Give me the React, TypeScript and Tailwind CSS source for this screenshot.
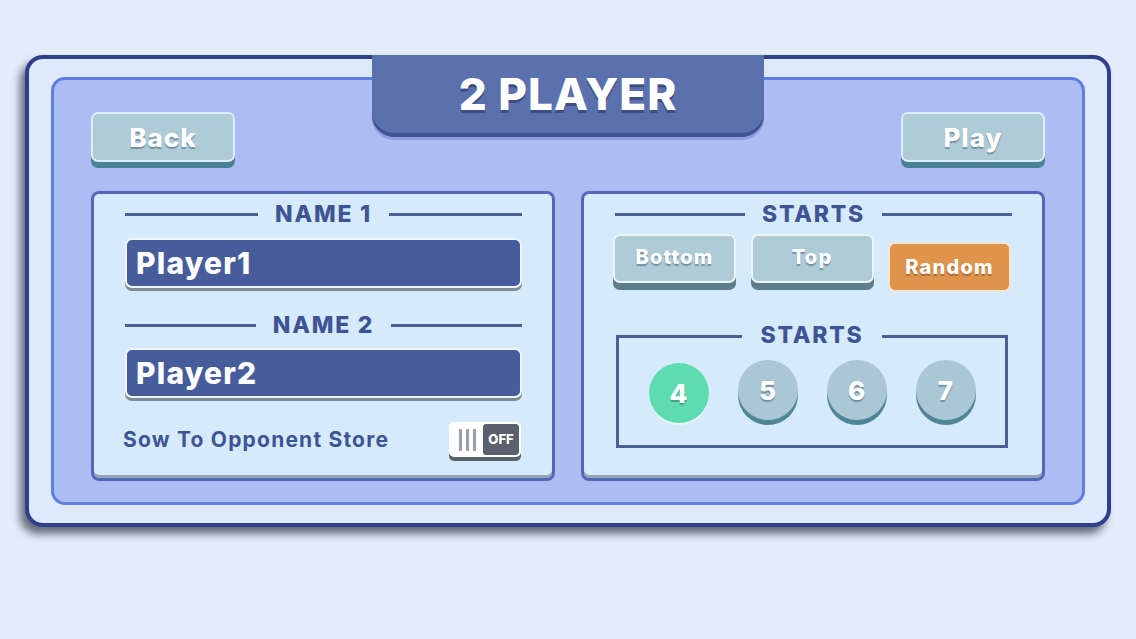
import React, { useState } from "react";

const font = { fontFamily: 'Inter, "Open Sans", "Liberation Sans", sans-serif' };

function Heading({ label }: { label: string }) {
  return (
    <div className="flex items-center h-[24px]">
      <div className="flex-1 h-[3px] bg-[#4a5e98]" />
      <span className="px-[17px] text-[23px] leading-none font-extrabold text-[#3e5494] tracking-[1.8px]">{label}</span>
      <div className="flex-1 h-[3px] bg-[#4a5e98]" />
    </div>
  );
}

function NameInput({ value, onChange }: { value: string; onChange: (v: string) => void }) {
  return (
    <input
      value={value}
      onChange={e => onChange(e.target.value)}
      className="w-full h-[50px] bg-[#475d9b] border-2 border-[#eef6fd] rounded-[7px] shadow-[0_3px_0_#7f8c98] px-[9px] text-[30px] font-extrabold text-white tracking-[1.2px] outline-none"
      style={font}
    />
  );
}

export default function App() {
  const [p1, setP1] = useState("Player1");
  const [p2, setP2] = useState("Player2");
  const [starts, setStarts] = useState("Random");
  const [count, setCount] = useState(4);
  const [sow, setSow] = useState(false);

  const greyBtn = "bg-[#afcbd7] border-2 border-[#dceef6] rounded-[7px] text-white font-extrabold [text-shadow:0_2px_1px_rgba(70,100,120,0.55)]";

  return (
    <div className="w-full h-[639px] bg-[#e5edfc] pt-[55px] pl-[25px]" style={font}>
      <div className="relative w-[1086px] h-[472px] bg-[#dfe9fc] border-4 border-[#2f3f8a] rounded-[18px] px-[22px] py-[18px] shadow-[-5px_7px_8px_rgba(30,38,50,0.65)]">
        <div className="w-full h-full bg-[#adbcf2] border-[3px] border-[#5d7fe3] rounded-[14px] px-[37px] pt-[32px]">
          <div className="flex justify-between">
            <button className={greyBtn + " w-[144px] h-[50px] text-[26px] tracking-[1px] shadow-[0_6px_0_#4b8293]"}>Back</button>
            <button className={greyBtn + " w-[144px] h-[50px] text-[26px] tracking-[1px] shadow-[0_6px_0_#4b8293]"}>Play</button>
          </div>
          <div className="grid grid-cols-2 gap-[26px] mt-[29px]">
            <div className="h-[290px] bg-[#d5ebfc] border-[3px] border-[#5468b8] rounded-[8px] shadow-[inset_0_-3px_0_#90a4b2] pl-[31px] pr-[30px] pt-[8px]">
              <Heading label="NAME 1" />
              <div className="mt-[12px]"><NameInput value={p1} onChange={setP1} /></div>
              <div className="mt-[25px]"><Heading label="NAME 2" /></div>
              <div className="mt-[11px]"><NameInput value={p2} onChange={setP2} /></div>
              <div className="flex items-center justify-between mt-[24px]">
                <span className="text-[21px] font-bold text-[#3e5494] tracking-[1.2px] ml-[-2px]">Sow To Opponent Store</span>
                <button onClick={() => setSow(s => !s)} className="flex w-[72px] h-[35px] mr-[1px] rounded-[5px] bg-white border-2 border-white shadow-[0_4px_0_#5b606d] overflow-hidden">
                  <div className="flex-1 flex items-center justify-center gap-[4px]">
                    <div className="w-[3px] h-[22px] bg-[#9aa0ab]" />
                    <div className="w-[3px] h-[22px] bg-[#9aa0ab]" />
                    <div className="w-[3px] h-[22px] bg-[#9aa0ab]" />
                  </div>
                  <div className="w-[36px] h-full bg-[#5b606d] rounded-[3px] flex items-center justify-center text-[13px] font-extrabold text-white">{sow ? "ON" : "OFF"}</div>
                </button>
              </div>
            </div>
            <div className="h-[290px] bg-[#d5ebfc] border-[3px] border-[#5468b8] rounded-[8px] shadow-[inset_0_-3px_0_#90a4b2] pl-[31px] pr-[30px] pt-[8px]">
              <Heading label="STARTS" />
              <div className="flex justify-between h-[58px] mt-[8px] ml-[-2px] mr-[1px]">
                {["Bottom", "Top", "Random"].map(s => (
                  <button
                    key={s}
                    onClick={() => setStarts(s)}
                    className={
                      starts === s
                        ? "w-[123px] h-[50px] mt-[8px] bg-[#df944c] border-2 border-[#f6e4d2] rounded-[7px] text-white text-[20px] font-extrabold tracking-[1.2px] [text-shadow:0_2px_1px_rgba(120,70,30,0.5)]"
                        : "w-[123px] h-[49px] bg-[#afcbd7] border-2 border-[#eaf5fa] rounded-[7px] text-white text-[20px] font-extrabold tracking-[1.2px] shadow-[0_7px_0_#5e7d8c] [text-shadow:0_2px_1px_rgba(70,100,120,0.55)] pb-[3px]"
                    }
                  >
                    {s}
                  </button>
                ))}
              </div>
              <div className="relative mt-[43px] w-[392px] ml-[1px] h-[113px] border-[3px] border-[#4a5e98]">
                <div className="absolute left-0 right-0 top-[-14px] flex justify-center">
                  <span className="bg-[#d5ebfc] px-[18px] text-[23px] leading-none font-extrabold text-[#3e5494] tracking-[1.8px]">STARTS</span>
                </div>
                <div className="flex justify-center gap-[29px] pt-[22px]">
                  {[4, 5, 6, 7].map(n => (
                    <button
                      key={n}
                      onClick={() => setCount(n)}
                      className={
                        count === n
                          ? "w-[60px] h-[60px] mt-[3px] rounded-full bg-[#5edcb1] shadow-[0_2px_0_#eaf6fa] text-white text-[26px] font-extrabold [text-shadow:0_2px_1px_rgba(40,110,90,0.5)]"
                          : "w-[60px] h-[60px] rounded-full bg-[#abc7d5] shadow-[0_5px_0_#4f8597] text-white text-[26px] font-extrabold [text-shadow:0_2px_1px_rgba(70,100,120,0.55)]"
                      }
                    >
                      {n}
                    </button>
                  ))}
                </div>
              </div>
            </div>
          </div>
        </div>
        <div className="absolute left-[343px] top-[-4px] w-[392px] h-[78px] bg-[#5a71ad] rounded-b-[22px] shadow-[0_4px_0_#3f5292,0_7px_0_rgba(80,100,170,0.35)] flex items-center justify-center">
          <span className="text-[44px] font-extrabold text-white tracking-[1px] [text-shadow:0_3px_0_rgba(40,55,100,0.6)]">2 PLAYER</span>
        </div>
      </div>
    </div>
  );
}
